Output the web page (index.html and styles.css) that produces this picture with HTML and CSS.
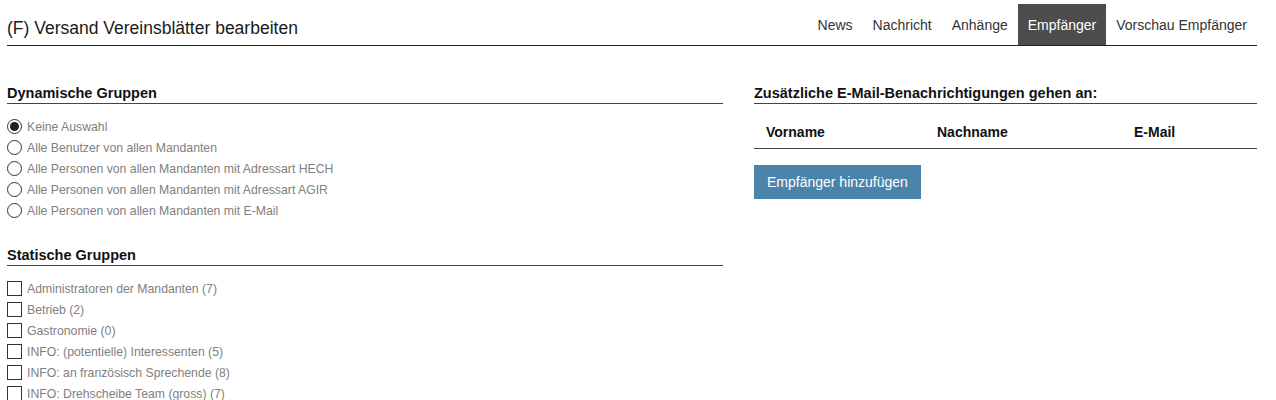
FILE: index.html
```html
<!DOCTYPE html>
<html lang="de">
<head>
<meta charset="utf-8">
<title>Versand Vereinsblätter bearbeiten</title>
<link rel="stylesheet" href="styles.css">
</head>
<body>
<div class="page">
  <header class="header">
    <h1 class="title">(F) Versand Vereinsblätter bearbeiten</h1>
    <nav class="tabs">
      <a class="tab">News</a>
      <a class="tab">Nachricht</a>
      <a class="tab">Anhänge</a>
      <a class="tab active">Empfänger</a>
      <a class="tab">Vorschau Empfänger</a>
    </nav>
  </header>

  <main class="main">
    <section class="col-left">
      <h2 class="section-title">Dynamische Gruppen</h2>
      <ul class="options">
        <li class="option"><span class="radio checked"></span><span class="label">Keine Auswahl</span></li>
        <li class="option"><span class="radio"></span><span class="label">Alle Benutzer von allen Mandanten</span></li>
        <li class="option"><span class="radio"></span><span class="label">Alle Personen von allen Mandanten mit Adressart HECH</span></li>
        <li class="option"><span class="radio"></span><span class="label">Alle Personen von allen Mandanten mit Adressart AGIR</span></li>
        <li class="option"><span class="radio"></span><span class="label">Alle Personen von allen Mandanten mit E-Mail</span></li>
      </ul>

      <h2 class="section-title second">Statische Gruppen</h2>
      <ul class="options">
        <li class="option"><span class="checkbox"></span><span class="label">Administratoren der Mandanten (7)</span></li>
        <li class="option"><span class="checkbox"></span><span class="label">Betrieb (2)</span></li>
        <li class="option"><span class="checkbox"></span><span class="label">Gastronomie (0)</span></li>
        <li class="option"><span class="checkbox"></span><span class="label">INFO: (potentielle) Interessenten (5)</span></li>
        <li class="option"><span class="checkbox"></span><span class="label">INFO: an französisch Sprechende (8)</span></li>
        <li class="option"><span class="checkbox"></span><span class="label">INFO: Drehscheibe Team (gross) (7)</span></li>
      </ul>
    </section>

    <section class="col-right">
      <h2 class="section-title">Zusätzliche E-Mail-Benachrichtigungen gehen an:</h2>
      <table class="recipients">
        <thead>
          <tr>
            <th class="c1">Vorname</th>
            <th class="c2">Nachname</th>
            <th class="c3">E-Mail</th>
          </tr>
        </thead>
        <tbody></tbody>
      </table>
      <button class="btn" type="button">Empfänger hinzufügen</button>
    </section>
  </main>
</div>
</body>
</html>
```

FILE: styles.css
```css
* { box-sizing: border-box; }

body {
  margin: 0;
  background: #fff;
  font-family: "Liberation Sans", Arial, sans-serif;
  color: #222;
}

.page {
  width: 1250px;
  margin-left: 7px;
  padding-top: 4px;
}

.header {
  display: flex;
  justify-content: space-between;
  align-items: stretch;
  border-bottom: 1px solid #222;
  height: 42px;
}

.title {
  margin: 0;
  align-self: flex-end;
  font-size: 17.5px;
  font-weight: normal;
  line-height: 20px;
  padding-bottom: 7px;
  color: #1a1a1a;
}

.tabs {
  display: flex;
}

.tab {
  display: block;
  padding: 2px 10px 0;
  font-size: 14px;
  line-height: 39px;
  color: #333;
  text-decoration: none;
}

.tab.active {
  background: #4d4d4d;
  color: #fff;
}

.main {
  display: grid;
  grid-template-columns: 716px 503px;
  column-gap: 31px;
  margin-top: 39px;
}

.section-title {
  margin: 0;
  font-size: 14.5px;
  font-weight: bold;
  line-height: 16px;
  padding-bottom: 2px;
  border-bottom: 1px solid #444;
  color: #111;
}

.section-title.second {
  margin-top: 26px;
}

.options {
  list-style: none;
  margin: 12px 0 0;
  padding: 0;
}

.option {
  display: flex;
  align-items: center;
  height: 21px;
}

.label {
  font-size: 12.25px;
  color: #808080;
  margin-left: 5px;
}

.radio {
  width: 15px;
  height: 15px;
  border: 1px solid #333;
  border-radius: 50%;
  display: flex;
  align-items: center;
  justify-content: center;
  flex: none;
}

.radio.checked::after {
  content: "";
  width: 9px;
  height: 9px;
  border-radius: 50%;
  background: #222;
}

.checkbox {
  width: 15px;
  height: 15px;
  border: 1px solid #333;
  flex: none;
}

.recipients {
  width: 503px;
  border-collapse: collapse;
  margin-top: 11px;
  table-layout: fixed;
}

.recipients th {
  text-align: left;
  font-size: 14px;
  font-weight: bold;
  line-height: 17px;
  padding: 9px 12px 7px;
  color: #111;
  border-bottom: 1px solid #444;
}

.recipients .c1 { width: 171px; }
.recipients .c2 { width: 197px; }
.recipients .c3 { width: 135px; }

.btn {
  margin-top: 16px;
  display: block;
  height: 34px;
  padding: 0 13px;
  border: none;
  background: #4b84ab;
  color: #fff;
  font-family: "Liberation Sans", Arial, sans-serif;
  font-size: 14px;
  line-height: 34px;
}
```
